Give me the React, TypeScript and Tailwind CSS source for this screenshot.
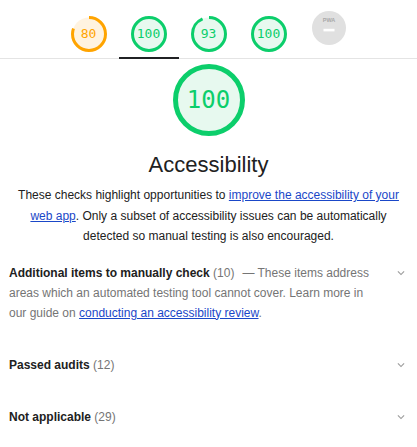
import React from "react";

interface GaugeProps {
  score: number;
  size: number;
  stroke: number;
  color: string;
  fill: string;
  textClass: string;
}

function Gauge({ score, size, stroke, color, fill, textClass }: GaugeProps) {
  const r = (size - stroke) / 2;
  const c = 2 * Math.PI * r;
  return (
    <div className="grid place-items-center">
      <svg width={size} height={size} className="[grid-area:1/1]">
        <circle cx={size / 2} cy={size / 2} r={r} fill={fill} />
        <circle
          cx={size / 2}
          cy={size / 2}
          r={r}
          fill="none"
          stroke={color}
          strokeWidth={stroke}
          strokeDasharray={`${(c * score) / 100} ${c}`}
          transform={`rotate(-90 ${size / 2} ${size / 2})`}
        />
      </svg>
      <span className={`[grid-area:1/1] font-['DejaVu_Sans_Mono',monospace] ${textClass}`} style={{ color }}>
        {score}
      </span>
    </div>
  );
}

function PwaGauge() {
  return (
    <svg width="36" height="36" viewBox="0 0 36 36">
      <circle cx="18" cy="18" r="17" fill="#e0e0e0" />
      <text x="18" y="11.5" textAnchor="middle" fontSize="5.5" fontFamily="Liberation Sans, sans-serif" fontWeight="700" fill="#a8a8a8">
        PWA
      </text>
      <rect x="12.5" y="18.8" width="11" height="2.6" fill="#ffffff" />
    </svg>
  );
}

function Chevron() {
  return (
    <svg width="14" height="14" viewBox="0 0 24 24" className="mt-[3px]">
      <path d="M7.41 8.59L12 13.17l4.59-4.58L18 10l-6 6-6-6 1.41-1.41z" fill="#9e9e9e" />
    </svg>
  );
}

const orange = "#ffa400";
const green = "#0cce6b";

const tabs = [
  { score: 80, color: orange, fill: "#fff3e0" },
  { score: 100, color: green, fill: "#e7f9ef" },
  { score: 93, color: green, fill: "#e7f9ef" },
  { score: 100, color: green, fill: "#e7f9ef" },
];

function GroupRow({ title, count, children }: { title: string; count: number; children?: React.ReactNode }) {
  return (
    <div className="flex px-[9px] py-4">
      <div className="flex-1 leading-[20px]">
        <span className="font-bold text-[#212121]">{title}</span>{" "}
        <span className="text-[#757575]">({count})</span>
        {children}
      </div>
      <div className="ml-[16px] w-[14px] flex justify-center">
        <Chevron />
      </div>
    </div>
  );
}

export default function App() {
  return (
    <div className="w-[417px] h-[447px] overflow-hidden bg-white font-['Liberation_Sans',Arial,sans-serif] text-[12px] text-[#212121]">
      <div className="flex justify-center h-[59px] border-b border-[#e4e4e4]">
        {tabs.map((t, i) => (
          <div
            key={i}
            className={`w-[60px] h-[59px] -mb-px flex justify-center pt-[10px] border-b-2 ${
              i === 1 ? "border-[#202124]" : "border-transparent"
            }`}
          >
            <Gauge score={t.score} size={36} stroke={3} color={t.color} fill={t.fill} textClass="text-[13px]" />
          </div>
        ))}
        <div className="w-[60px] h-[59px] flex justify-center pt-[10px]">
          <PwaGauge />
        </div>
      </div>

      <div className="flex flex-col items-center">
        <div className="mt-[5px]">
          <Gauge score={100} size={72} stroke={5} color={green} fill="#e7f9ef" textClass="text-[24px]" />
        </div>
        <h2 className="mt-[15px] text-[22px] leading-[28px] text-[#212121]">Accessibility</h2>
        <p className="mt-[6px] px-[10px] text-center leading-[20.5px]">
          These checks highlight opportunities to{" "}
          <a className="text-[#1a47c8] underline">improve the accessibility of your web app</a>. Only a subset of
          accessibility issues can be automatically detected so manual testing is also encouraged.
        </p>
      </div>

      <div>
        <GroupRow title="Additional items to manually check" count={10}>
          <span className="text-[#757575] ml-[8px]">
            — These items address areas which an automated testing tool cannot cover. Learn more in our guide on{" "}
            <a className="text-[#1a47c8] underline">conducting an accessibility review</a>.
          </span>
        </GroupRow>
        <GroupRow title="Passed audits" count={12} />
        <GroupRow title="Not applicable" count={29} />
      </div>
    </div>
  );
}
